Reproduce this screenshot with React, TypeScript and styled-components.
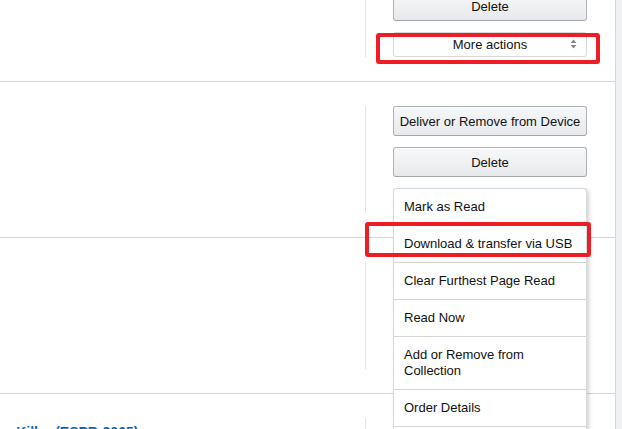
import React from 'react';
import styled, { createGlobalStyle } from 'styled-components';

const GlobalStyle = createGlobalStyle`
  html, body {
    margin: 0;
    padding: 0;
    background: #fff;
    overflow: hidden;
  }
  body {
    font-family: 'Liberation Sans', Arial, sans-serif;
    color: #111;
  }
`;

interface IBook {
  id: string;
  title?: string;
  menuOpen?: boolean;
}

const books: IBook[] = [
  { id: 'b1' },
  { id: 'b2', menuOpen: true },
  { id: 'b3' },
  { id: 'b4', title: 'ne Killer (ESPR-2005)' },
];

const menuItems = [
  'Mark as Read',
  'Download & transfer via USB',
  'Clear Furthest Page Read',
  'Read Now',
  'Add or Remove from Collection',
  'Order Details',
  'Return for Refund',
];

export default function App() {
  return (
    <>
      <GlobalStyle />
      <Page>
        <Main>
          <ScrollContent>
            {books.map((book) => (
              <Row key={book.id}>
                <Info>{book.title ? <TitleLink>{book.title}</TitleLink> : null}</Info>
                <Actions>
                  <Button>Deliver or Remove from Device</Button>
                  <Button>Delete</Button>
                  <SelectWrap>
                    <Select>
                      More actions
                      <Arrows>
                        <svg width="7" height="10" viewBox="0 0 7 10">
                          <path d="M3.5 0.5 L6.5 4 H0.5 Z" fill="#888" />
                          <path d="M3.5 9.5 L6.5 6 H0.5 Z" fill="#888" />
                        </svg>
                      </Arrows>
                    </Select>
                    {book.menuOpen ? (
                      <Menu>
                        {menuItems.map((item) => (
                          <MenuItem key={item}>{item}</MenuItem>
                        ))}
                      </Menu>
                    ) : null}
                  </SelectWrap>
                </Actions>
              </Row>
            ))}
          </ScrollContent>
        </Main>
        <Gutter />
        <Highlight $left={376} $top={33} $width={224} $height={31} />
        <Highlight $left={365} $top={222} $width={226} $height={35} />
      </Page>
    </>
  );
}

const Page = styled.div`
  position: relative;
  display: flex;
  width: 622px;
  height: 429px;
  overflow: hidden;
`;

const Main = styled.div`
  width: 615px;
  height: 100%;
  overflow: hidden;
`;

const ScrollContent = styled.div`
  margin-top: -74px;
`;

const Gutter = styled.div`
  width: 6px;
  height: 100%;
  border-left: 1px solid #d5d9d9;
  background: #eef0f2;
`;

const Row = styled.div`
  display: flex;
  height: 156px;
  box-sizing: border-box;
  border-bottom: 1px solid #d5d5d5;
`;

const Info = styled.div`
  flex: 1;
  padding-top: 30px;
  overflow: hidden;
`;

const TitleLink = styled.a`
  display: block;
  font-size: 14px;
  line-height: 16px;
  font-weight: bold;
  color: #0066c0;
  white-space: nowrap;
  text-indent: -4px;
`;

const Actions = styled.div`
  align-self: flex-start;
  display: flex;
  flex-direction: column;
  gap: 11px;
  width: 250px;
  box-sizing: border-box;
  margin-top: 24px;
  padding-left: 27px;
  border-left: 1px solid #e3e3e3;
`;

const Button = styled.button`
  width: 194px;
  height: 30px;
  padding: 1px 4px 0;
  box-sizing: border-box;
  border: 1px solid #adb1b8;
  border-bottom-color: #a2a6ac;
  border-radius: 3px;
  background: linear-gradient(to bottom, #f7f8fa, #e7e9ec);
  box-shadow: inset 0 1px 0 rgba(255, 255, 255, 0.6);
  font-family: 'Liberation Sans', Arial, sans-serif;
  font-size: 13px;
  color: #111;
  text-align: center;
`;

const SelectWrap = styled.div`
  position: relative;
  width: 194px;
`;

const Select = styled.div`
  position: relative;
  height: 25px;
  box-sizing: border-box;
  border: 1px solid #d5d9d9;
  border-radius: 3px;
  background: #fff;
  font-size: 13px;
  line-height: 24px;
  text-align: center;
  color: #111;
`;

const Arrows = styled.span`
  position: absolute;
  right: 9px;
  top: 6px;
  line-height: 0;
`;

const Menu = styled.div`
  position: absolute;
  top: 0;
  left: 0;
  z-index: 5;
  width: 194px;
  box-sizing: border-box;
  background: #fff;
  border: 1px solid #d5d9d9;
  border-radius: 3px 3px 0 0;
  box-shadow: 2px 2px 4px rgba(0, 0, 0, 0.18);
`;

const MenuItem = styled.div`
  padding: 10px 11px 10px 10px;
  font-size: 13px;
  line-height: 16px;
  color: #111;
  border-bottom: 1px solid #d5d5d5;
`;

const Highlight = styled.div<{ $left: number; $top: number; $width: number; $height: number }>`
  position: absolute;
  left: ${(p) => p.$left}px;
  top: ${(p) => p.$top}px;
  width: ${(p) => p.$width}px;
  height: ${(p) => p.$height}px;
  box-sizing: border-box;
  border: 4px solid #ee1d25;
  border-radius: 3px;
  z-index: 10;
`;
